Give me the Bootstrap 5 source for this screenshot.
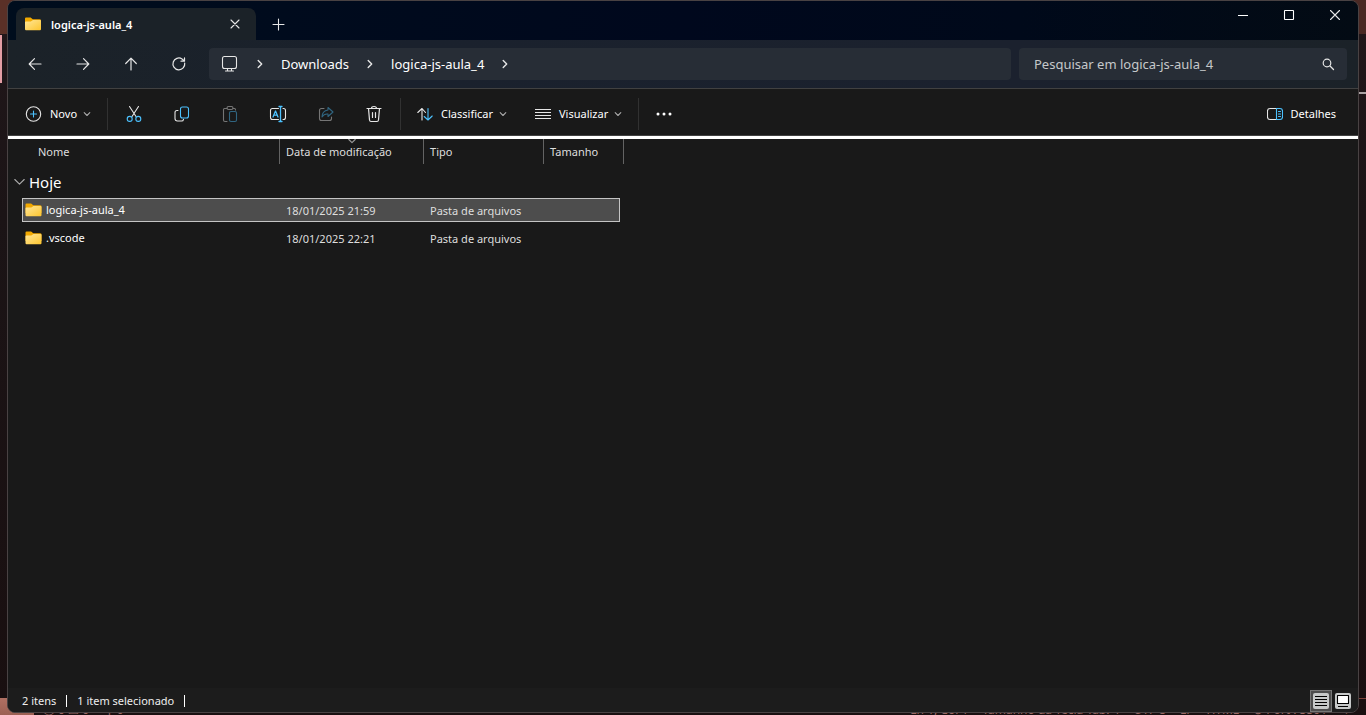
<!DOCTYPE html>
<html lang="pt-BR">
<head>
<meta charset="utf-8">
<meta name="viewport" content="width=device-width, initial-scale=1">
<title>logica-js-aula_4</title>
<link href="https://cdn.jsdelivr.net/npm/bootstrap@5.3.0/dist/css/bootstrap.min.css" rel="stylesheet">
<style>
body { font: 11px/16px "Noto Sans", "Open Sans", sans-serif; color: #fff; background: #1b1416; }
button, input { font: inherit; color: inherit; }
svg { display: block; flex: none; fill: none; stroke: #e6e6e6; stroke-width: 1.1; stroke-linecap: round; stroke-linejoin: round; }
.b { stroke: #4cc2ff; }
.desktop { padding: 0 7px 2px; background:
  linear-gradient(#e49da4, #e49da4) 0 35px / 2px 48px no-repeat,
  linear-gradient(#a9a2a3, #a9a2a3) 100% 92px / 8px 2px no-repeat,
  linear-gradient(90deg, #5a3027, #4a2924) 0 0 / 100% 34px no-repeat,
  linear-gradient(#b07063, #9c6053) 0 100% / 34px 17px no-repeat,
  linear-gradient(#7d4038, #7d4038) 100% calc(100% - 16px) / 10px 1px no-repeat,
  linear-gradient(#21171a, #1b1416 30%, #190f10); }
.behind { inset: auto 0 -3px 0; color: #9a6763; padding: 0 14px 0 43px; font-size: 12px; }
.behind .end-info { gap: 14px; }
.win { border: 1px solid #494243; border-radius: 8px; background: #191919; overflow: hidden; }
.titlebar { height: 39px; background: linear-gradient(90deg, #000d1d, #00081d 50%, #00091a 75%, #030b14); }
.tab { width: 240px; height: 32px; margin-left: 8px; padding: 0 12px 0 9px; background: #1b2228; border-radius: 8px 8px 0 0; }
.tab strong { padding-left: 10px; padding-top: 2px; }
.plain { display: flex; align-items: center; justify-content: center; background: none; border: 0; padding: 0; }
.winbtn { width: 46px; height: 28px; }
.newtab { width: 46px; height: 32px; }
.navrow { height: 49px; padding: 0 11px 0 3px; background: linear-gradient(90deg, #1b2228, #1a212d 30%, #1b212e 75%, #1b2228); border-bottom: 1px solid #414141; }
.navbtn { width: 48px; height: 32px; }
.field { height: 32px; border-radius: 4px; background: #272d36; font-size: 13px; line-height: 20px; }
.address { margin: 0 8px 0 6px; padding-left: 12px; }
.address .sep { width: 8px; margin: 0 17px; }
.search { width: 328px; padding: 0 12px 0 15px; }
.search input { background: none; border: 0; outline: 0; padding: 0; min-width: 0; height: 24px; }
.search input::placeholder { color: #c5c8ca; opacity: 1; }
.crumb { color: #fff; text-decoration: none; }
.crumb:hover { color: #fff; }
.tools { height: 47px; padding: 3px 8px 0 2px; border-bottom: 1px solid #414141; }
.tool { width: 48px; height: 32px; }
.wide { height: 32px; padding: 0 14px; gap: 8px; }
.wide .caret { margin-left: -2px; stroke: #aaa; }
.rule { width: 1px; height: 32px; background: #313131; margin: 0 2px; }
.dim svg { opacity: .45; }
.whiteline { height: 3px; background: #fff; }
.files { width: 616px; table-layout: fixed; color: #dedede; border-collapse: separate; border-spacing: 0; }
.files th { height: 25px; font-weight: 400; border-right: 1px solid #636363; padding: 0 6px; line-height: 24px; }
.files th:first-child { padding-left: 30px; }
.files td { padding: 1px 6px 0; height: 24px; }
.files .blank { padding: 0; }
.files .entry { padding: 0 3px; color: #fff; }
.files .group td { height: 34px; padding: 2px 6px 0; font-size: 15px; line-height: 20px; color: #fff; }
.files .gap td { height: 4px; padding: 0; line-height: 0; }
.picked td:not(.blank) { background: #4d4d4d; border: solid #c4c4c4; border-width: 1px 0; }
.picked td.entry { border-left-width: 1px; padding-left: 2px; }
.picked td.last { border-right-width: 1px; }
.sortmark { top: 0; left: 50%; margin-left: -4px; stroke: #999; }
.status { height: 24px; padding: 1px 4px 0 14px; background: #1c1c1c; color: #eee; }
.tick { width: 1px; height: 12px; background: #fff; margin: 0 10px; }
.view { width: 22px; height: 22px; }
.view.on { background: #4d4d4d; border: 1px solid #777; }
</style>
</head>
<body>
<svg width="0" height="0" class="position-absolute" aria-hidden="true">
<defs>
<linearGradient id="fg" x1="0" y1="0" x2="1" y2="1"><stop stop-color="#ffe79a"/><stop offset="1" stop-color="#fdc52e"/></linearGradient>
<symbol id="folder" viewBox="0 0 16 14"><path fill="#f2a900" stroke="none" d="M0 1.500Q0 .5 1 .5H5.600L7.800 2.200H14.500Q16 2.200 16 3.500V10H0Z"/><path fill="url(#fg)" stroke="none" d="M0 5Q0 4.400 1 4.400H5.800L8 3H15Q16 3 16 4V12Q16 13.200 15 13.200H1Q0 13.200 0 12Z"/></symbol>
<symbol id="down" viewBox="0 0 8 8"><path d="M1.200 2.700 4 5.500 6.800 2.700"/></symbol>
<symbol id="right" viewBox="0 0 8 12"><path stroke-width="1.400" d="M2.200 2.500 5.700 6 2.200 9.500"/></symbol>
</defs>
</svg>
<div class="desktop position-relative min-vh-100 d-flex flex-column overflow-hidden">
<div class="behind position-absolute d-flex justify-content-between" aria-hidden="true"><span>ⓧ 0 ⚠ 0 &nbsp; &nbsp; ⚲ 0</span><span class="end-info d-flex"><span>Ln 1, Col 1</span><span>Tamanho da Tecla Tab: 4</span><span>UTF-8</span><span>LF</span><span>HTML</span><span>⊘ Port : 5501</span><span>♤</span></span></div>
<main class="win position-relative flex-grow-1 d-flex flex-column">
<header class="titlebar d-flex align-items-end">
<div class="tab d-flex align-items-center">
<svg width="16" height="14"><use href="#folder"/></svg><strong class="fw-semibold flex-grow-1">logica-js-aula_4</strong>
<button class="plain" aria-label="Fechar guia"><svg width="18" height="18"><path d="M5 5l8 8M13 5l-8 8"/></svg></button>
</div>
<button class="plain newtab" aria-label="Nova guia"><svg width="14" height="14"><path d="M6.500 2v11M1 7.500h11"/></svg></button>
<div class="ms-auto d-flex align-self-start">
<button class="plain winbtn" aria-label="Minimizar"><svg width="12" height="12"><path stroke="#fff" stroke-linecap="butt" d="M1 6.500h10"/></svg></button>
<button class="plain winbtn" aria-label="Maximizar"><svg width="12" height="12"><rect stroke="#fff" x="1.500" y="1.500" width="9" height="9" rx=".5"/></svg></button>
<button class="plain winbtn" aria-label="Fechar"><svg width="12" height="12"><path d="M1.500 1.500l9 9M10.500 1.500l-9 9"/></svg></button>
</div>
</header>
<nav class="navrow d-flex align-items-center">
<button class="plain navbtn" aria-label="Voltar"><svg width="16" height="16"><path stroke-width="1.200" d="M14 8H2.200M7.500 2.700 2.200 8l5.300 5.300"/></svg></button>
<button class="plain navbtn" aria-label="Avançar"><svg width="16" height="16"><path stroke-width="1.200" d="M2 8h11.800M8.500 2.700 13.800 8l-5.300 5.300"/></svg></button>
<button class="plain navbtn" aria-label="Acima"><svg width="16" height="16"><path stroke-width="1.200" d="M8 14V2.200M2.700 7.500 8 2.200l5.300 5.300"/></svg></button>
<button class="plain navbtn" aria-label="Atualizar"><svg width="16" height="16"><path stroke-width="1.200" d="M13.700 7A5.900 5.900 0 1 1 11 2.900l2 1.900M13.500 1.800v3.400H10"/></svg></button>
<div class="field address flex-grow-1 d-flex align-items-center">
<svg width="18" height="18"><rect x="1.500" y="1.500" width="14" height="12" rx="2"/><path d="M6.500 13.500v2M10.500 13.500v2M4.500 16h8"/></svg>
<svg class="sep" height="12"><use href="#right"/></svg>
<a class="crumb" href="#">Downloads</a>
<svg class="sep" height="12"><use href="#right"/></svg>
<a class="crumb" href="#">logica-js-aula_4</a>
<svg class="sep" height="12"><use href="#right"/></svg>
</div>
<label class="field search d-flex align-items-center"><input class="flex-grow-1" type="text" placeholder="Pesquisar em logica-js-aula_4" aria-label="Pesquisar em logica-js-aula_4"><svg width="14" height="14"><circle cx="6" cy="6" r="3.800" stroke-width="1.200"/><path stroke-width="1.300" d="M9 9l3.500 3.500"/></svg></label>
</nav>
<div class="tools d-flex align-items-center" role="toolbar">
<button class="plain wide"><svg width="18" height="18"><circle cx="9.500" cy="9" r="7.200"/><path class="b" d="M9.500 6v6M6.500 9h6"/></svg>Novo<svg class="caret" width="8" height="8"><use href="#down"/></svg></button>
<span class="rule"></span>
<button class="plain tool" aria-label="Recortar"><svg width="18" height="18"><path d="M4.500 1.500l6.500 10M13.500 1.500 7 11.500"/><circle class="b" cx="4.700" cy="13.900" r="2.500"/><circle class="b" cx="13.300" cy="13.900" r="2.500"/></svg></button>
<button class="plain tool" aria-label="Copiar"><svg width="18" height="18"><path d="M5 5.500H4a2 2 0 0 0-2 2V13.500a2.500 2.500 0 0 0 2.500 2.500h4a2 2 0 0 0 2-1.700"/><rect class="b" x="7.500" y="2" width="8" height="11" rx="2"/></svg></button>
<button class="plain tool dim" aria-label="Colar"><svg width="18" height="18"><path d="M6 3.500H3.500Q2.500 3.500 2.500 4.500V15Q2.500 16.500 4 16.500H6M12 3.500h1.500q1 0 1 1.500"/><rect x="6" y="1.500" width="6" height="3" rx="1.500"/><rect class="b" x="8.500" y="6.500" width="7" height="10" rx="1.500"/></svg></button>
<button class="plain tool" aria-label="Renomear"><svg width="18" height="18"><path d="M9.500 3.500H3.500Q1.500 3.500 1.500 5.500v7q0 2 2 2h6M14 3.500h.5q2 0 2 2v7q0 2-2 2H14"/><path class="b" stroke-width="1.300" d="M4 12 6.500 6 9 12M4.800 10.200h3.400M11.500 1.500v15M10 1.500h3M10 16.500h3"/></svg></button>
<button class="plain tool dim" aria-label="Compartilhar"><svg width="18" height="18"><path d="M7 3.500H4.500q-2 0-2 2v8q0 2 2 2h8q2 0 2-2V12"/><path class="b" d="M11 2.500l5 4.500-5 4.500V9Q7 8.500 5 12q0-6 6-7Z"/></svg></button>
<button class="plain tool" aria-label="Excluir"><svg width="18" height="18"><path stroke-width="1.200" d="M2 3.500h14M6.500 3.500q0-2 2.500-2t2.500 2M3.500 3.500l1 11.500q.2 1.500 1.500 1.500h6q1.300 0 1.500-1.500l1-11.500M7.500 7.500v5M10.500 7.500v5"/></svg></button>
<span class="rule"></span>
<button class="plain wide"><svg width="16" height="16"><path d="M5 14V2.500M.8 6.500l4.200-4 3.500 4"/><path class="b" d="M11 2.500V14M7.200 10.500l3.800 3.500 4.200-4"/></svg>Classificar<svg class="caret" width="8" height="8"><use href="#down"/></svg></button>
<button class="plain wide"><svg width="16" height="16"><path stroke-linecap="butt" d="M0 3.500h16M0 6.500h16M0 9.500h16M0 12.500h16"/></svg>Visualizar<svg class="caret" width="8" height="8"><use href="#down"/></svg></button>
<span class="rule"></span>
<button class="plain tool" aria-label="Ver mais"><svg width="18" height="6"><g fill="#fff" stroke="none"><circle cx="2" cy="3" r="1.500"/><circle cx="8" cy="3" r="1.500"/><circle cx="14" cy="3" r="1.500"/></g></svg></button>
<button class="plain wide ms-auto"><svg width="16" height="16"><path d="M9.500 2.500H3q-2.500 0-2.500 2.500v6q0 2.500 2.500 2.500h6.500"/><path class="b" d="M9.500 2.500H13q2.500 0 2.500 2.500v6q0 2.500-2.500 2.500H9.500ZM11.500 5.500h2M11.500 8h2M11.500 10.500h2"/></svg>Detalhes</button>
</div>
<div class="whiteline"></div>
<div class="flex-grow-1">
<table class="files">
<colgroup><col style="width:14px"><col style="width:258px"><col style="width:144px"><col style="width:120px"><col style="width:76px"><col style="width:4px"></colgroup>
<thead><tr><th colspan="2" scope="col">Nome</th><th class="position-relative" scope="col">Data de modificação<svg class="sortmark position-absolute" width="8" height="6" viewBox="0 1 8 6"><path d="M.8 1.500 4 4.700 7.200 1.500"/></svg></th><th scope="col">Tipo</th><th colspan="2" scope="col">Tamanho</th></tr></thead>
<tbody>
<tr class="group"><td colspan="6"><div class="d-flex align-items-center"><svg class="me-1" width="11" height="8"><path stroke="#aaa" d="M.8 1.500 5.500 6.200 10.200 1.500"/></svg>Hoje</div></td></tr>
<tr class="picked"><td class="blank"></td><td class="entry"><div class="d-flex align-items-center gap-1"><svg width="17" height="14"><use href="#folder"/></svg>logica-js-aula_4</div></td><td>18/01/2025 21:59</td><td>Pasta de arquivos</td><td class="last"></td><td class="blank"></td></tr>
<tr class="gap"><td colspan="6"></td></tr>
<tr><td class="blank"></td><td class="entry"><div class="d-flex align-items-center gap-1"><svg width="17" height="14"><use href="#folder"/></svg>.vscode</div></td><td>18/01/2025 22:21</td><td>Pasta de arquivos</td><td></td><td class="blank"></td></tr>
</tbody>
</table>
</div>
<footer class="status d-flex align-items-center">
<span>2 itens</span><span class="tick"></span><span>1 item selecionado</span><span class="tick"></span>
<button class="plain view on ms-auto" aria-label="Detalhes"><svg width="16" height="16"><rect width="16" height="16" rx="2" fill="#c6c8c8" stroke="none"/><path stroke="#000" stroke-linecap="butt" d="M2 3.500h12M2 6.500h12M2 9.500h12M2 12.500h12"/></svg></button>
<button class="plain view" aria-label="Ícones grandes"><svg width="16" height="16"><rect width="16" height="16" rx="2" fill="#c6c8c8" stroke="none"/><rect x="2.500" y="2.500" width="11" height="8" fill="#fff" stroke="#000"/><path stroke="#000" stroke-linecap="butt" d="M3 13.500h10"/></svg></button>
</footer>
</main>
</div>
<script src="https://cdn.jsdelivr.net/npm/bootstrap@5.3.0/dist/js/bootstrap.bundle.min.js"></script>
</body>
</html>
